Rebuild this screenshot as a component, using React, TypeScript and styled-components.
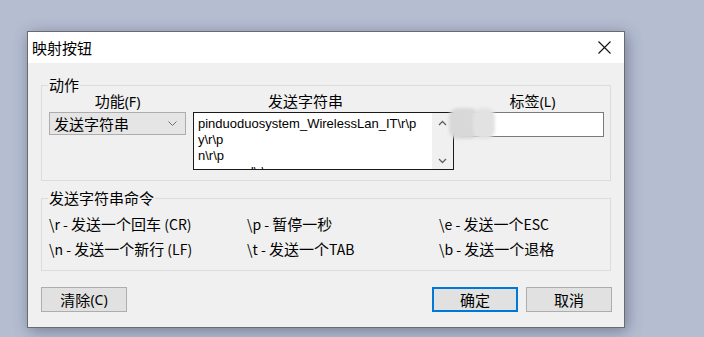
import React from "react"
import styled, { createGlobalStyle } from "styled-components"

const GlobalStyle = createGlobalStyle`
  html, body {
    margin: 0;
    padding: 0;
    background: #b5bdd1;
  }
  body {
    font-family: "Noto Sans CJK SC", "Noto Sans", sans-serif;
    font-size: 15px;
    color: #000;
  }
`

const Page = styled.div`
  height: 337px;
  padding: 31px 0 0 27px;
  box-sizing: border-box;
  overflow: hidden;
`

const Dialog = styled.div`
  width: 598px;
  height: 297px;
  box-sizing: border-box;
  border: 1px solid #6b6b6b;
  background: #f0f0f0;
  box-shadow: 2px 3px 14px rgba(40, 50, 80, 0.45);
  display: flex;
  flex-direction: column;
`

const TitleBar = styled.div`
  height: 31px;
  flex: none;
  background: #fff;
  display: flex;
  align-items: center;
  justify-content: space-between;
  padding-left: 4px;
`

const Title = styled.span`
  font-size: 15px;
  line-height: 20px;
`

const CloseButton = styled.div`
  width: 40px;
  height: 31px;
  display: flex;
  align-items: center;
  justify-content: center;
`

const Body = styled.div`
  flex: 1;
  display: flex;
  flex-direction: column;
  padding: 0 12px 0 13px;
`

const Group = styled.fieldset<{ $top: number }>`
  margin: ${(p) => p.$top}px 1px 0 0;
  padding: 0 6px 0 7px;
  border: 1px solid #dcdcdc;
  min-width: 0;
`

const Legend = styled.legend`
  padding: 0 1px;
  margin-left: -1px;
  line-height: 20px;
`

const ActionGrid = styled.div`
  display: grid;
  grid-template-columns: 137px 261px 1fr;
  column-gap: 7px;
  padding-bottom: 10px;
`

const Header = styled.div<{ $shift?: number }>`
  text-align: center;
  line-height: 18px;
  padding-right: ${(p) => p.$shift || 0}px;
  margin-top: -3px;
`

const Hotkey = styled.span`
  font-family: "Noto Sans", sans-serif;
  font-size: 14px;
`

const Combo = styled.div`
  height: 23px;
  box-sizing: border-box;
  margin-top: 1px;
  border: 1px solid #adadad;
  background: #e5e5e5;
  display: flex;
  align-items: center;
  justify-content: space-between;
  padding: 0 8px 0 4px;
  line-height: 20px;
`

const EditBox = styled.div`
  height: 58px;
  margin-top: 1px;
  box-sizing: border-box;
  border: 1px solid #1a1a1a;
  background: #fff;
  display: flex;
  overflow: hidden;
`

const EditText = styled.div`
  flex: 1;
  padding: 3px 0 0 4px;
  font-family: "Liberation Sans", Arial, sans-serif;
  font-size: 13px;
  line-height: 16px;
  white-space: pre;
  overflow: hidden;
`

const ScrollBar = styled.div`
  width: 21px;
  flex: none;
  background: #f0f0f0;
  display: flex;
  flex-direction: column;
  justify-content: space-between;
  align-items: center;
  padding: 7px 0 5px;
`

const LabelCell = styled.div`
  position: relative;
  margin-top: 1px;
`

const LabelInput = styled.div`
  height: 25px;
  box-sizing: border-box;
  border: 1px solid #7a7a7a;
  background: #fff;
  margin-left: -1px;
`

const Smudge = styled.div<{ $left: number; $width: number; $tone: string }>`
  position: absolute;
  top: -4px;
  left: ${(p) => p.$left}px;
  width: ${(p) => p.$width}px;
  height: 31px;
  border-radius: 9px;
  background: ${(p) => p.$tone};
  filter: blur(1.5px);
`

const CommandGrid = styled.div`
  display: grid;
  grid-template-columns: 198px 192px 1fr;
  grid-auto-rows: 25px;
  align-items: center;
  padding: 3px 0 9px;
`

const Command = styled.div`
  line-height: 25px;
  white-space: nowrap;
`

const Latin = styled.span`
  font-family: "Noto Sans CJK SC", sans-serif;
  font-size: 14px;
`

const ButtonRow = styled.div`
  display: flex;
  align-items: center;
  margin-top: 16px;
  gap: 8px;
`

const Spacer = styled.div`
  flex: 1;
`

const Button = styled.div<{ $default?: boolean }>`
  width: 86px;
  height: 25px;
  box-sizing: border-box;
  border: ${(p) => (p.$default ? "2px solid #0078d7" : "1px solid #adadad")};
  background: #e1e1e1;
  display: flex;
  align-items: center;
  justify-content: center;
  line-height: 20px;
`

const Chevron = ({ up }: { up?: boolean }) => (
  <svg width="9" height="6" viewBox="0 0 9 6">
    <polyline
      points={up ? "1,5 4.5,1.5 8,5" : "1,1 4.5,4.5 8,1"}
      fill="none"
      stroke="#606060"
      strokeWidth="1.3"
    />
  </svg>
)

const commands: [string, string, string][] = [
  ["\\r - ", "发送一个回车", " (CR)"],
  ["\\p - ", "暂停一秒", ""],
  ["\\e - ", "发送一个", "ESC"],
  ["\\n - ", "发送一个新行", " (LF)"],
  ["\\t - ", "发送一个", "TAB"],
  ["\\b - ", "发送一个退格", ""],
]

export default function App() {
  return (
    <Page>
      <GlobalStyle />
      <Dialog>
        <TitleBar>
          <Title>映射按钮</Title>
          <CloseButton>
            <svg width="13" height="13" viewBox="0 0 13 13">
              <path d="M0.5 0.5 L12.5 12.5 M12.5 0.5 L0.5 12.5" stroke="#111" strokeWidth="1.1" />
            </svg>
          </CloseButton>
        </TitleBar>
        <Body>
          <Group $top={12}>
            <Legend>动作</Legend>
            <ActionGrid>
              <Header>
                功能<Hotkey>(F)</Hotkey>
              </Header>
              <Header $shift={36}>发送字符串</Header>
              <Header>
                标签<Hotkey>(L)</Hotkey>
              </Header>
              <Combo>
                <span>发送字符串</span>
                <svg width="9" height="5" viewBox="0 0 9 5">
                  <polyline points="0.5,0.5 4.5,4.5 8.5,0.5" fill="none" stroke="#707070" strokeWidth="1" />
                </svg>
              </Combo>
              <EditBox>
                <EditText>
                  {"pinduoduosystem_WirelessLan_IT\\r\\p\ny\\r\\p\nn\\r\\p\npassword\\r\\p"}
                </EditText>
                <ScrollBar>
                  <Chevron up />
                  <Chevron />
                </ScrollBar>
              </EditBox>
              <LabelCell>
                <LabelInput />
                <Smudge $left={-12} $width={30} $tone="#d8d8d8" />
                <Smudge $left={12} $width={22} $tone="#e2e2e2" />
              </LabelCell>
            </ActionGrid>
          </Group>
          <Group $top={7}>
            <Legend>发送字符串命令</Legend>
            <CommandGrid>
              {commands.map(([code, zh, tail]) => (
                <Command key={code}>
                  <Latin>{code}</Latin>
                  {zh}
                  <Latin>{tail}</Latin>
                </Command>
              ))}
            </CommandGrid>
          </Group>
          <ButtonRow>
            <Button>
              清除<Hotkey>(C)</Hotkey>
            </Button>
            <Spacer />
            <Button $default>确定</Button>
            <Button>取消</Button>
          </ButtonRow>
        </Body>
      </Dialog>
    </Page>
  )
}
